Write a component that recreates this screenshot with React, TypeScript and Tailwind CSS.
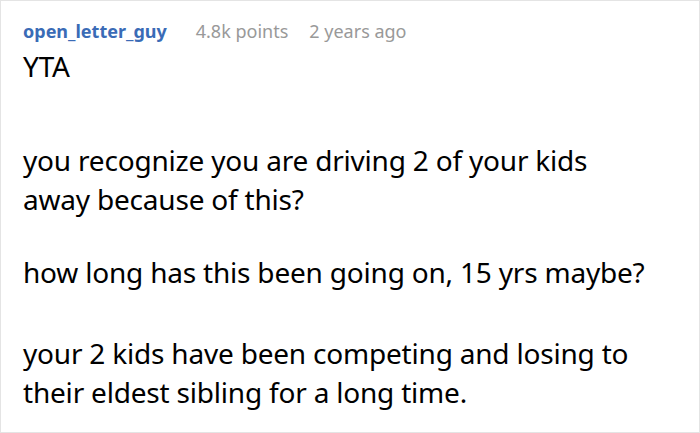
export default function App() {
  const paragraphs = [
    'you recognize you are driving 2 of your kids away because of this?',
    'how long has this been going on, 15 yrs maybe?',
    'your 2 kids have been competing and losing to their eldest sibling for a long time.',
  ];

  return (
    <div className="h-[433px] w-[700px] overflow-hidden border border-[#e4e4e4] bg-white font-['Noto_Sans',sans-serif]">
      <div className="px-[22px] pt-[16px]">
        <div className="flex items-baseline text-[18px] leading-[28px]">
          <span className="font-bold text-[#3a6bb6]">open_letter_guy</span>
          <span className="ml-[29px] text-[#999999]">4.8k points</span>
          <span className="ml-[21px] text-[#999999]">2 years ago</span>
        </div>
        <div className="mt-[2px] text-[28px] leading-[39px] tracking-[-0.2px] text-black">
          <p>YTA</p>
          <p className="mt-[55px] w-[610px]">{paragraphs[0]}</p>
          <p className="mt-[34px]">{paragraphs[1]}</p>
          <p className="mt-[42px] w-[630px]">{paragraphs[2]}</p>
        </div>
      </div>
    </div>
  );
}
